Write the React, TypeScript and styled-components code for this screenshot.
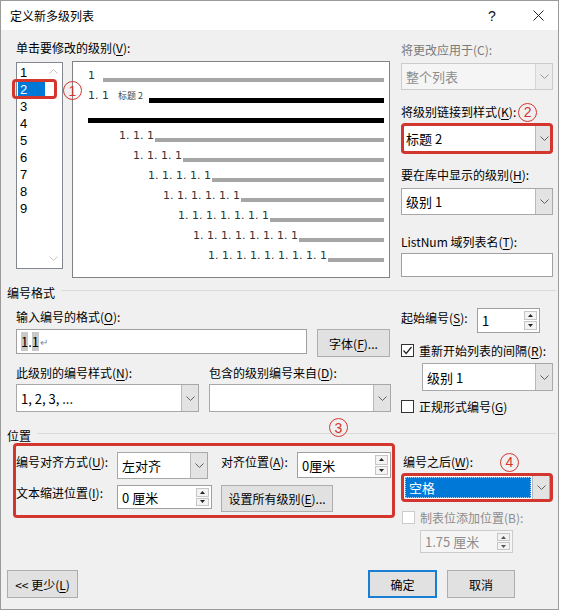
import React from "react";
import styled, { createGlobalStyle, css } from "styled-components";

const RED = "#d3362f";

const GlobalStyle = createGlobalStyle`
  html, body { margin: 0; padding: 0; background: #ffffff; }
  body {
    font-family: "Noto Sans CJK SC", "Noto Sans", sans-serif;
    font-size: 12px;
    color: #000000;
  }
  * { box-sizing: border-box; }
  u { text-underline-offset: 2px; }
`;

const Window = styled.div`
  width: 559px;
  height: 610px;
  border: 1px solid #9a9a9a;
  background: #f0f0f0;
  display: flex;
  flex-direction: column;
  overflow: hidden;
`;

const TitleBar = styled.div`
  flex: none;
  height: 29px;
  background: #ffffff;
  display: flex;
  align-items: center;
  padding: 0 10px 0 9px;
  line-height: 16px;
`;

const TitleButtons = styled.div`
  margin-left: auto;
  display: flex;
  align-items: center;
  gap: 26px;
`;

const TitleButton = styled.span`
  width: 20px;
  display: flex;
  justify-content: center;
  font-family: "Liberation Sans", sans-serif;
  font-size: 14px;
  color: #111;
`;

const Body = styled.div`
  flex: 1;
  display: flex;
  flex-direction: column;
  padding: 10px 4px 11px 6px;
`;

/* ---------- common controls ---------- */

const Label = styled.div<{ $disabled?: boolean; $mt?: number }>`
  height: 16px;
  line-height: 16px;
  white-space: nowrap;
  display: flex;
  align-items: center;
  margin-top: ${(p) => p.$mt ?? 0}px;
  color: ${(p) => (p.$disabled ? "#7a7a7a" : "#000")};
`;

const Combo = styled.div<{ $w?: number; $h?: number; $disabled?: boolean }>`
  position: relative;
  width: ${(p) => (p.$w ? `${p.$w}px` : "100%")};
  height: ${(p) => p.$h ?? 27}px;
  flex: none;
  display: flex;
  border: 1px solid ${(p) => (p.$disabled ? "#cccccc" : "#a8a8a8")};
  background: ${(p) => (p.$disabled ? "#f5f5f5" : "#ffffff")};
  color: ${(p) => (p.$disabled ? "#8d8d8d" : "#000")};
  font-size: 13px;
`;

const ComboText = styled.div<{ $selected?: boolean }>`
  flex: 1;
  display: flex;
  align-items: center;
  padding-left: 4px;
  white-space: nowrap;
  ${(p) =>
    p.$selected &&
    css`
      margin: 1px;
      background: #0078d7;
      color: #ffffff;
      outline: 1px dotted #a9d0f5;
      outline-offset: -1px;
    `}
`;

const ComboButton = styled.div<{ $disabled?: boolean }>`
  width: 17px;
  flex: none;
  display: flex;
  align-items: center;
  justify-content: center;
  background: ${(p) => (p.$disabled ? "#ececec" : "#e3e3e3")};
  border-left: 1px solid ${(p) => (p.$disabled ? "#d6d6d6" : "#b8b8b8")};
`;

const TextBox = styled.div<{ $w?: number; $h: number }>`
  width: ${(p) => (p.$w ? `${p.$w}px` : "100%")};
  height: ${(p) => p.$h}px;
  flex: none;
  border: 1px solid #a0a0a0;
  background: #ffffff;
  display: flex;
  align-items: center;
  padding-left: 4px;
  font-size: 13px;
`;

const Spin = styled.div<{ $w: number; $h: number; $disabled?: boolean }>`
  width: ${(p) => p.$w}px;
  height: ${(p) => p.$h}px;
  flex: none;
  display: flex;
  border: 1px solid ${(p) => (p.$disabled ? "#cccccc" : "#a0a0a0")};
  background: ${(p) => (p.$disabled ? "#f5f5f5" : "#ffffff")};
  color: ${(p) => (p.$disabled ? "#8d8d8d" : "#000")};
  font-size: 13px;
`;

const SpinValue = styled.div`
  flex: 1;
  display: flex;
  align-items: center;
  padding-left: 4px;
  white-space: nowrap;
`;

const SpinButtons = styled.div`
  width: 15px;
  flex: none;
  display: flex;
  flex-direction: column;
  gap: 1px;
  padding: 2px 2px 2px 0;
`;

const SpinButton = styled.div`
  flex: 1;
  border: 1px solid #c6c6c6;
  background: #f3f3f3;
  display: flex;
  align-items: center;
  justify-content: center;
`;

const Button = styled.div<{ $w: number; $h?: number; $default?: boolean }>`
  width: ${(p) => p.$w}px;
  height: ${(p) => p.$h ?? 28}px;
  flex: none;
  display: flex;
  align-items: center;
  justify-content: center;
  background: #e1e1e1;
  border: ${(p) => (p.$default ? "2px solid #1a7fd4" : "1px solid #adadad")};
  white-space: nowrap;
`;

const CheckRow = styled.div<{ $mt: number; $disabled?: boolean; $pl?: number }>`
  height: 16px;
  display: flex;
  align-items: center;
  gap: 5px;
  margin-top: ${(p) => p.$mt}px;
  padding-left: ${(p) => p.$pl ?? 0}px;
  white-space: nowrap;
  color: ${(p) => (p.$disabled ? "#8c8c8c" : "#000")};
`;

const CheckBox = styled.span<{ $disabled?: boolean }>`
  width: 13px;
  height: 13px;
  flex: none;
  display: flex;
  align-items: center;
  justify-content: center;
  background: #ffffff;
  border: 1px solid ${(p) => (p.$disabled ? "#cccccc" : "#333333")};
`;

const RedMark = styled.div<{ $inset: string }>`
  position: absolute;
  inset: ${(p) => p.$inset};
  border: 3px solid ${RED};
  border-radius: 4px;
  pointer-events: none;
`;

const Circled = styled.span`
  display: inline-flex;
  width: 19px;
  height: 19px;
  flex: none;
  align-items: center;
  justify-content: center;
  border: 1.5px solid ${RED};
  border-radius: 50%;
  color: ${RED};
  font-family: "Liberation Sans", sans-serif;
  font-size: 14px;
  line-height: 1;
`;

const FloatCircled = styled(Circled)<{ $left: number; $top: number }>`
  position: absolute;
  left: ${(p) => p.$left}px;
  top: ${(p) => p.$top}px;
`;

/* ---------- top section ---------- */

const TopSection = styled.div`
  display: flex;
  height: 238px;
  padding-left: 9px;
`;

const LevelColumn = styled.div`
  width: 374px;
  display: flex;
  flex-direction: column;
`;

const LevelRow = styled.div`
  position: relative;
  display: flex;
  align-items: flex-start;
  gap: 9px;
  margin-top: 6px;
`;

const ListBox = styled.div`
  width: 47px;
  height: 207px;
  display: flex;
  border: 1px solid #828790;
  background: #ffffff;
`;

const ListItems = styled.div`
  flex: 1;
  padding-top: 1px;
`;

const ListItem = styled.div<{ $selected?: boolean }>`
  height: 17px;
  line-height: 17px;
  margin-left: 1px;
  padding-left: 2px;
  font-family: "Liberation Sans", sans-serif;
  font-size: 13px;
  background: ${(p) => (p.$selected ? "#0078d7" : "transparent")};
  color: ${(p) => (p.$selected ? "#ffffff" : "#000")};
`;

const ListScroll = styled.div`
  width: 17px;
  display: flex;
  flex-direction: column;
  justify-content: space-between;
  align-items: center;
  padding: 6px 0 7px;
`;

const Preview = styled.div`
  width: 318px;
  height: 217px;
  margin-top: -1px;
  border: 1px solid #828282;
  background: #ffffff;
  padding: 8px 5px 0 0;
  display: flex;
  flex-direction: column;
`;

const PreviewRow = styled.div<{ $indent: number }>`
  height: 20px;
  display: flex;
  align-items: center;
  padding-left: ${(p) => p.$indent}px;
`;

const PreviewNum = styled.span`
  margin-bottom: 8px;
  font-family: "DejaVu Sans", sans-serif;
  font-size: 11px;
  line-height: 14px;
  color: #333333;
  white-space: pre;
`;

const PreviewStyle = styled.span`
  margin: 0 0 8px 9px;
  font-size: 9px;
  line-height: 12px;
  color: #444444;
`;

const PreviewBar = styled.div<{ $dark?: boolean; $gap: number }>`
  flex: 1;
  height: ${(p) => (p.$dark ? 5 : 4)}px;
  margin-left: ${(p) => p.$gap}px;
  background: ${(p) => (p.$dark ? "#000000" : "#a6a6a6")};
`;

const OptionsColumn = styled.div`
  width: 152px;
  margin-left: 11px;
  padding-top: 2px;
  display: flex;
  flex-direction: column;
`;

const Field = styled.div<{ $mt: number; $gap: number }>`
  position: relative;
  display: flex;
  flex-direction: column;
  gap: ${(p) => p.$gap}px;
  margin-top: ${(p) => p.$mt}px;
`;

const MarkedBox = styled.div`
  position: relative;
`;

/* ---------- group headers ---------- */

const GroupHeader = styled.div<{ $mt: number }>`
  position: relative;
  height: 16px;
  display: flex;
  align-items: center;
  margin: ${(p) => p.$mt}px -2px 0 0;
`;

const GroupLine = styled.div`
  flex: 1;
  height: 1px;
  margin: 0 0 4px 6px;
  background: #dadada;
`;

/* ---------- numbering format ---------- */

const MidSection = styled.div`
  display: flex;
  height: 112px;
  margin-top: 8px;
  padding-left: 9px;
`;

const MidLeft = styled.div`
  width: 375px;
  padding-top: 1px;
  display: flex;
  flex-direction: column;
`;

const InputRow = styled.div`
  display: flex;
  align-items: flex-start;
  gap: 10px;
  margin-top: 4px;
`;

const Shade = styled.span`
  background: #c9c9c9;
`;

const ReturnMark = styled.span`
  color: #8a8a8a;
  font-size: 10px;
  margin-left: 1px;
`;

const StyleGrid = styled.div`
  display: grid;
  grid-template-columns: 183px 182px;
  column-gap: 10px;
  row-gap: 3px;
  margin-top: 8px;
`;

const MidRight = styled.div`
  width: 152px;
  margin-left: 10px;
  display: flex;
  flex-direction: column;
`;

const StartRow = styled.div`
  display: grid;
  grid-template-columns: 76px 63px;
  align-items: start;
`;

/* ---------- position ---------- */

const PosSection = styled.div`
  display: flex;
  padding-left: 9px;
`;

const PosLeft = styled.div`
  width: 375px;
  padding-top: 9px;
`;

const PosGrid = styled.div`
  position: relative;
  display: grid;
  grid-template-columns: 101px 104px 76px 94px;
  grid-template-rows: 27px 27px;
  row-gap: 6px;
  align-items: start;
`;

const PosRight = styled.div`
  width: 152px;
  margin-left: 10px;
  padding-top: 11px;
  display: flex;
  flex-direction: column;
`;

/* ---------- footer ---------- */

const Footer = styled.div`
  margin-top: auto;
  display: flex;
  align-items: center;
  gap: 10px;
  padding-right: 39px;
`;

const Spacer = styled.div`
  flex: 1;
`;

/* ---------- icons ---------- */

const ChevronDown = ({ color = "#5f5f5f" }: { color?: string }) => (
  <svg width="9" height="5" viewBox="0 0 9 5">
    <polyline points="0.5,0.5 4.5,4.5 8.5,0.5" fill="none" stroke={color} strokeWidth="1" />
  </svg>
);

const ChevronUp = ({ color = "#5f5f5f" }: { color?: string }) => (
  <svg width="9" height="5" viewBox="0 0 9 5">
    <polyline points="0.5,4.5 4.5,0.5 8.5,4.5" fill="none" stroke={color} strokeWidth="1" />
  </svg>
);

const TriUp = ({ color = "#222" }: { color?: string }) => (
  <svg width="5" height="3" viewBox="0 0 5 3">
    <polygon points="0,3 2.5,0 5,3" fill={color} />
  </svg>
);

const TriDown = ({ color = "#222" }: { color?: string }) => (
  <svg width="5" height="3" viewBox="0 0 5 3">
    <polygon points="0,0 5,0 2.5,3" fill={color} />
  </svg>
);

const CloseIcon = () => (
  <svg width="11" height="11" viewBox="0 0 11 11">
    <path d="M0.5 0.5 L10.5 10.5 M10.5 0.5 L0.5 10.5" stroke="#222" strokeWidth="1" />
  </svg>
);

const CheckMark = () => (
  <svg width="11" height="11" viewBox="0 0 11 11">
    <polyline points="1.5,5.5 4.2,8.5 9.5,2" fill="none" stroke="#222" strokeWidth="1.2" />
  </svg>
);

/* ---------- small composites ---------- */

const ComboBox = ({
  value,
  w,
  h,
  disabled,
  selected,
}: {
  value: React.ReactNode;
  w?: number;
  h?: number;
  disabled?: boolean;
  selected?: boolean;
}) => (
  <Combo $w={w} $h={h} $disabled={disabled}>
    <ComboText $selected={selected}>{value}</ComboText>
    <ComboButton $disabled={disabled}>
      <ChevronDown color={disabled ? "#9a9a9a" : "#5f5f5f"} />
    </ComboButton>
  </Combo>
);

const Spinner = ({
  value,
  w,
  h,
  disabled,
}: {
  value: string;
  w: number;
  h: number;
  disabled?: boolean;
}) => (
  <Spin $w={w} $h={h} $disabled={disabled}>
    <SpinValue>{value}</SpinValue>
    <SpinButtons>
      <SpinButton>
        <TriUp color={disabled ? "#555" : "#222"} />
      </SpinButton>
      <SpinButton>
        <TriDown color={disabled ? "#555" : "#222"} />
      </SpinButton>
    </SpinButtons>
  </Spin>
);

const previewRows = [
  { indent: 46, n: 3, gap: 1 },
  { indent: 60, n: 4, gap: 1 },
  { indent: 75, n: 5, gap: 1 },
  { indent: 90, n: 6, gap: 1 },
  { indent: 105, n: 7, gap: 1 },
  { indent: 120, n: 8, gap: 1 },
  { indent: 135, n: 9, gap: 1 },
];

const levels = [1, 2, 3, 4, 5, 6, 7, 8, 9];

export default function App() {
  return (
    <>
      <GlobalStyle />
      <Window>
        <TitleBar>
          定义新多级列表
          <TitleButtons>
            <TitleButton>?</TitleButton>
            <TitleButton>
              <CloseIcon />
            </TitleButton>
          </TitleButtons>
        </TitleBar>

        <Body>
          <TopSection>
            <LevelColumn>
              <Label>
                单击要修改的级别(<u>V</u>):
              </Label>
              <LevelRow>
                <ListBox>
                  <ListItems>
                    {levels.map((l) => (
                      <ListItem key={l} $selected={l === 2}>
                        {l}
                      </ListItem>
                    ))}
                  </ListItems>
                  <ListScroll>
                    <ChevronUp color="#c4c4c4" />
                    <ChevronDown color="#c4c4c4" />
                  </ListScroll>
                </ListBox>
                <Preview>
                  <PreviewRow $indent={15}>
                    <PreviewNum>1</PreviewNum>
                    <PreviewBar $gap={8} />
                  </PreviewRow>
                  <PreviewRow $indent={15}>
                    <PreviewNum>1. 1</PreviewNum>
                    <PreviewStyle>标题 2</PreviewStyle>
                    <PreviewBar $dark $gap={6} />
                  </PreviewRow>
                  <PreviewRow $indent={15}>
                    <PreviewBar $dark $gap={0} />
                  </PreviewRow>
                  {previewRows.map((r) => (
                    <PreviewRow key={r.n} $indent={r.indent}>
                      <PreviewNum>{Array(r.n).fill("1").join(". ")}</PreviewNum>
                      <PreviewBar $gap={r.gap} />
                    </PreviewRow>
                  ))}
                </Preview>
                <RedMark $inset="17px auto auto -4px" style={{ width: 45, height: 20 }} />
                <FloatCircled $left={47} $top={19}>1</FloatCircled>
              </LevelRow>
            </LevelColumn>

            <OptionsColumn>
              <Field $mt={0} $gap={5}>
                <Label $disabled>将更改应用于(C):</Label>
                <ComboBox value="整个列表" disabled />
              </Field>
              <Field $mt={14} $gap={5}>
                <Label>
                  将级别链接到样式(<u>K</u>):
                  <Circled style={{ marginLeft: 2 }}>2</Circled>
                </Label>
                <MarkedBox>
                  <ComboBox value="标题 2" />
                  <RedMark $inset="-2px 0 -2px 0" />
                </MarkedBox>
              </Field>
              <Field $mt={15} $gap={5}>
                <Label>
                  要在库中显示的级别(<u>H</u>):
                </Label>
                <ComboBox value="级别 1" />
              </Field>
              <Field $mt={19} $gap={3}>
                <Label>
                  ListNum 域列表名(<u>T</u>):
                </Label>
                <TextBox $h={24} />
              </Field>
            </OptionsColumn>
          </TopSection>

          <GroupHeader $mt={6}>
            编号格式
            <GroupLine />
          </GroupHeader>

          <MidSection>
            <MidLeft>
              <Label>
                输入编号的格式(<u>O</u>):
              </Label>
              <InputRow>
                <TextBox $w={291} $h={25}>
                  <Shade>1</Shade>.<Shade>1</Shade>
                  <ReturnMark>↵</ReturnMark>
                </TextBox>
                <Button $w={73}>
                  字体(<u>F</u>)...
                </Button>
              </InputRow>
              <StyleGrid>
                <Label>
                  此级别的编号样式(<u>N</u>):
                </Label>
                <Label>
                  包含的级别编号来自(<u>D</u>):
                </Label>
                <ComboBox value="1, 2, 3, ..." h={28} />
                <ComboBox value="" h={28} />
              </StyleGrid>
            </MidLeft>

            <MidRight>
              <StartRow>
                <Label $mt={2}>
                  起始编号(<u>S</u>):
                </Label>
                <Spinner value="1" w={63} h={25} />
              </StartRow>
              <CheckRow $mt={9}>
                <CheckBox>
                  <CheckMark />
                </CheckBox>
                <span>
                  重新开始列表的间隔(<u>R</u>):
                </span>
              </CheckRow>
              <div style={{ marginTop: 5, marginLeft: 21 }}>
                <ComboBox value="级别 1" w={131} h={28} />
              </div>
              <CheckRow $mt={7}>
                <CheckBox />
                <span>
                  正规形式编号(<u>G</u>)
                </span>
              </CheckRow>
            </MidRight>
          </MidSection>

          <GroupHeader $mt={7}>
            位置
            <GroupLine />
            <FloatCircled $left={322} $top={-9}>3</FloatCircled>
          </GroupHeader>

          <PosSection>
            <PosLeft>
              <PosGrid>
                <Label $mt={2}>
                  编号对齐方式(<u>U</u>):
                </Label>
                <ComboBox value="左对齐" w={91} h={27} />
                <Label $mt={2}>
                  对齐位置(<u>A</u>):
                </Label>
                <Spinner value="0厘米" w={94} h={26} />
                <Label>
                  文本缩进位置(<u>I</u>):
                </Label>
                <Spinner value="0 厘米" w={95} h={24} />
                <Button $w={112} $h={27}>
                  设置所有级别(<u>E</u>)...
                </Button>
                <RedMark $inset="-9px -4px -6px -3px" />
              </PosGrid>
            </PosLeft>

            <PosRight>
              <Label style={{ paddingLeft: 2 }}>
                编号之后(<u>W</u>):
                <Circled style={{ marginLeft: 27 }}>4</Circled>
              </Label>
              <MarkedBox style={{ marginTop: 5, marginLeft: 2, width: 147 }}>
                <ComboBox value="空格" h={25} selected />
                <RedMark $inset="-2px -3px -2px -2px" />
              </MarkedBox>
              <CheckRow $mt={9} $disabled $pl={1}>
                <CheckBox $disabled />
                <span>制表位添加位置(B):</span>
              </CheckRow>
              <div style={{ marginTop: 5, marginLeft: 19 }}>
                <Spinner value="1.75 厘米" w={93} h={23} disabled />
              </div>
            </PosRight>
          </PosSection>

          <Footer>
            <Button $w={71}>
              {"<< 更少("}
              <u>L</u>)
            </Button>
            <Spacer />
            <Button $w={69} $default>
              确定
            </Button>
            <Button $w={68}>取消</Button>
          </Footer>
        </Body>
      </Window>
    </>
  );
}
